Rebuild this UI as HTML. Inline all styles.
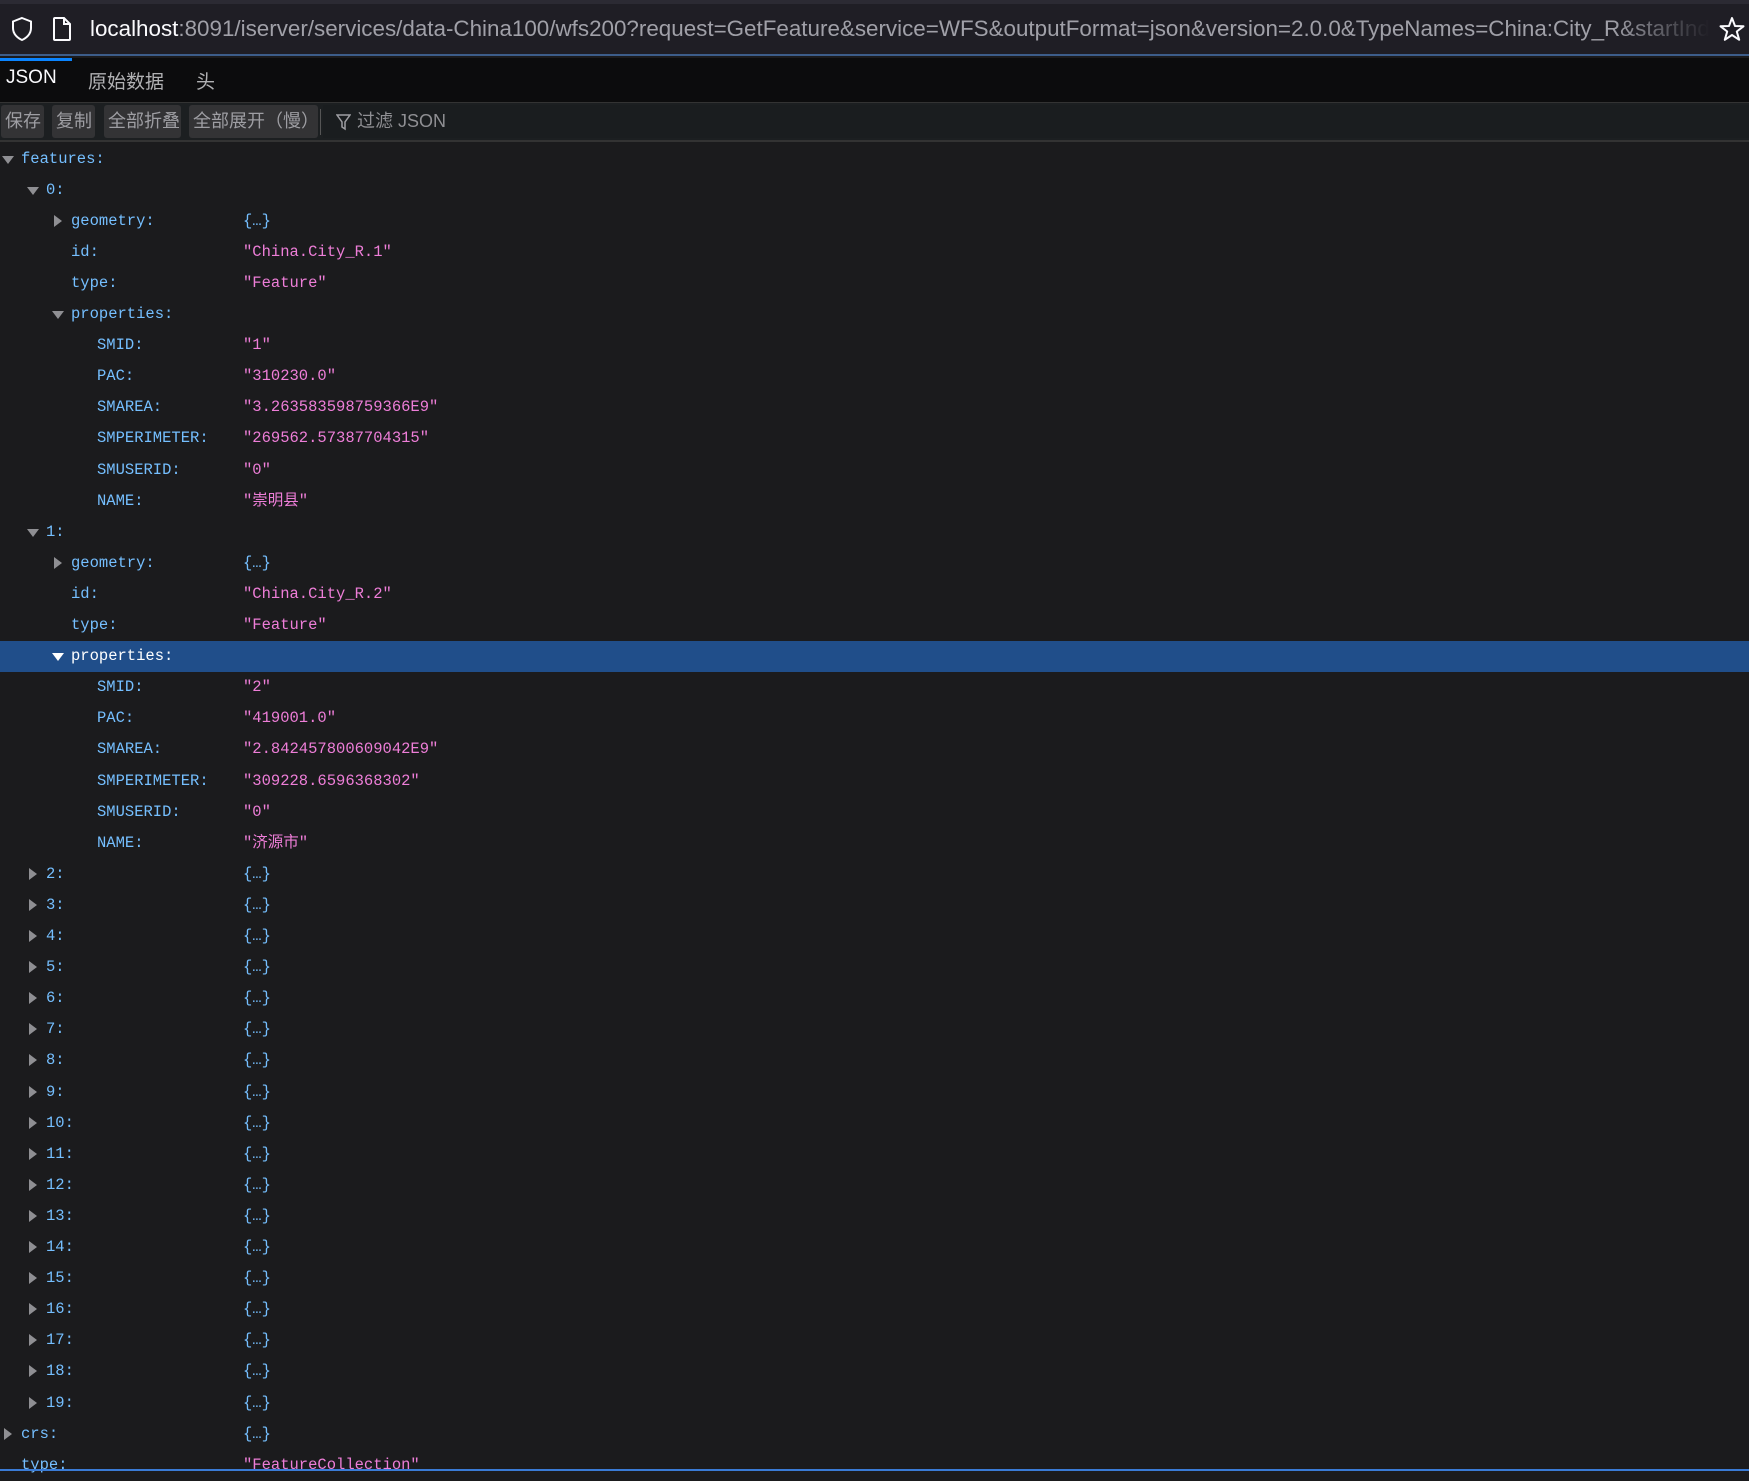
<!DOCTYPE html>
<html><head><meta charset="utf-8"><style>
*{margin:0;padding:0;box-sizing:border-box}
body{width:1749px;height:1471px;background:#1b1b1d;overflow:hidden;position:relative;font-family:"Liberation Sans","Noto Sans CJK SC",sans-serif}
#top{position:absolute;left:0;top:0;width:1749px;height:4px;background:#2b2a33}
#url{position:absolute;left:0;top:4px;width:1749px;height:52px;background:#1f1e25;border-bottom:2px solid #3d5d8a}
#url .t{position:absolute;left:90px;top:12px;font-size:22.4px;color:#a0a0a8;white-space:nowrap;width:1620px;overflow:hidden;-webkit-mask-image:linear-gradient(to right,#000 94%,transparent 100%)}
#url .t b{font-weight:normal;color:#fbfbfe}
#tabs{position:absolute;left:0;top:58px;width:1749px;height:45px;background:#0c0c0d;border-bottom:1px solid #333}
#tabs .ind{position:absolute;left:0;top:0;width:72px;height:3px;background:#0a84ff}
#tabs span{position:absolute;top:9px;font-size:19px;color:#b1b1b3}
#tb{position:absolute;left:0;top:103px;width:1749px;height:39px;background:#1c1f21;border-bottom:2px solid #333}
.btn{position:absolute;top:2px;height:33px;background:#333335;border-radius:3px;color:#9e9ea3;font-size:18px;line-height:33px;padding-left:4px;white-space:nowrap}
.row{position:absolute;height:31px;line-height:31px;font-family:"Liberation Mono","DejaVu Sans Mono","Noto Sans CJK SC",monospace;font-size:15.5px;color:#75bfff;white-space:pre}
.v{position:absolute;left:243px;top:0}
.s{color:#ee7ed8}
.arr{position:absolute;width:0;height:0}
.down{border-left:6px solid transparent;border-right:6px solid transparent;border-top:8px solid #8f8f93}
.right{border-top:6px solid transparent;border-bottom:6px solid transparent;border-left:8px solid #8f8f93}
.sel{background:#204e8a;width:1749px;left:0!important;color:#fff}
</style></head><body>
<div id="top"></div>
<div id="url">
<svg style="position:absolute;left:10px;top:12px" width="24" height="26" viewBox="0 0 24 26"><path d="M12 2 L21 5.5 V12 C21 18 16.5 22 12 24 C7.5 22 3 18 3 12 V5.5 Z" fill="none" stroke="#fbfbfe" stroke-width="2"/></svg>
<svg style="position:absolute;left:52px;top:12px" width="20" height="26" viewBox="0 0 20 26"><path d="M3 2 H12 L18 8 V23 a1 1 0 0 1 -1 1 H3 a1 1 0 0 1 -1 -1 V3 a1 1 0 0 1 1 -1 Z M12 2 V8 H18" fill="none" stroke="#fbfbfe" stroke-width="2"/></svg>
<div class="t"><b>localhost</b>:8091/iserver/services/data-China100/wfs200?request=GetFeature&amp;service=WFS&amp;outputFormat=json&amp;version=2.0.0&amp;TypeNames=China:City_R&amp;startIndex</div>
<svg style="position:absolute;left:1719px;top:12px" width="26" height="26" viewBox="0 0 26 26"><path d="M13 2 L16 10 L24.5 10.3 L17.8 15.5 L20.2 23.8 L13 19 L5.8 23.8 L8.2 15.5 L1.5 10.3 L10 10 Z" fill="none" stroke="#fbfbfe" stroke-width="2" stroke-linejoin="round"/></svg>
</div>
<div id="tabs"><div class="ind"></div><span style="left:6px;color:#fbfbfe">JSON</span><span style="left:88px">原始数据</span><span style="left:196px">头</span></div>
<div id="tb">
<div class="btn" style="left:1px;width:43px">保存</div>
<div class="btn" style="left:52px;width:43px">复制</div>
<div class="btn" style="left:104px;width:77px">全部折叠</div>
<div class="btn" style="left:189px;width:129px">全部展开（慢）</div>
<div style="position:absolute;left:320px;top:6px;width:1px;height:26px;background:#555"></div>
<div style="position:absolute;left:323px;top:2px;width:1426px;height:33px;background:#1a1d1f"></div>
<svg style="position:absolute;left:336px;top:11px" width="15" height="17" viewBox="0 0 15 17"><path d="M1 1 H14 L9 8 V15 L6 13 V8 Z" fill="none" stroke="#9e9ea3" stroke-width="1.5"/></svg>
<div style="position:absolute;left:357px;top:2px;line-height:33px;font-size:18px;color:#8f8f93">过滤 JSON</div>
</div>
<div id="rows"></div>
<div style="position:absolute;left:0;top:1469px;width:1749px;height:2px;background:#3a7bd5"></div>
<script>
var d=[[0,'features:',null,'d'],[1,'0:',null,'d'],[2,'geometry:','{…}','r'],[2,'id:','"China.City_R.1"'],[2,'type:','"Feature"'],[2,'properties:',null,'d'],
[3,'SMID:','"1"'],[3,'PAC:','"310230.0"'],[3,'SMAREA:','"3.263583598759366E9"'],[3,'SMPERIMETER:','"269562.57387704315"'],[3,'SMUSERID:','"0"'],[3,'NAME:','"崇明县"'],
[1,'1:',null,'d'],[2,'geometry:','{…}','r'],[2,'id:','"China.City_R.2"'],[2,'type:','"Feature"'],[2,'properties:',null,'d',1],
[3,'SMID:','"2"'],[3,'PAC:','"419001.0"'],[3,'SMAREA:','"2.842457800609042E9"'],[3,'SMPERIMETER:','"309228.6596368302"'],[3,'SMUSERID:','"0"'],[3,'NAME:','"济源市"']];
for(var i=2;i<20;i++)d.push([1,i+':','{…}','r']);
d.push([0,'crs:','{…}','r']);d.push([0,'type:','"FeatureCollection"']);
var xs=[21,46,71,97],h='';
d.forEach(function(r,i){var y=159+i*31.1-15.5,x=xs[r[0]];
var cls='row'+(r[4]?' sel':'');
var st=r[4]?'left:0;top:'+y+'px':'left:0;top:'+y+'px;width:1749px';
h+='<div class="'+cls+'" style="'+st+'">';
if(r[3]=='d')h+='<div class="arr down" style="left:'+(x-19)+'px;top:12px;'+(r[4]?'border-top-color:#fff':'')+'"></div>';
if(r[3]=='r')h+='<div class="arr right" style="left:'+(x-17)+'px;top:9px"></div>';
h+='<span style="position:absolute;left:'+x+'px;top:0">'+r[1]+'</span>';
if(r[2])h+='<span class="v'+(r[2][0]=='"'?' s':'')+'">'+r[2]+'</span>';
h+='</div>';});
document.getElementById('rows').innerHTML=h;
</script>
</body></html>
